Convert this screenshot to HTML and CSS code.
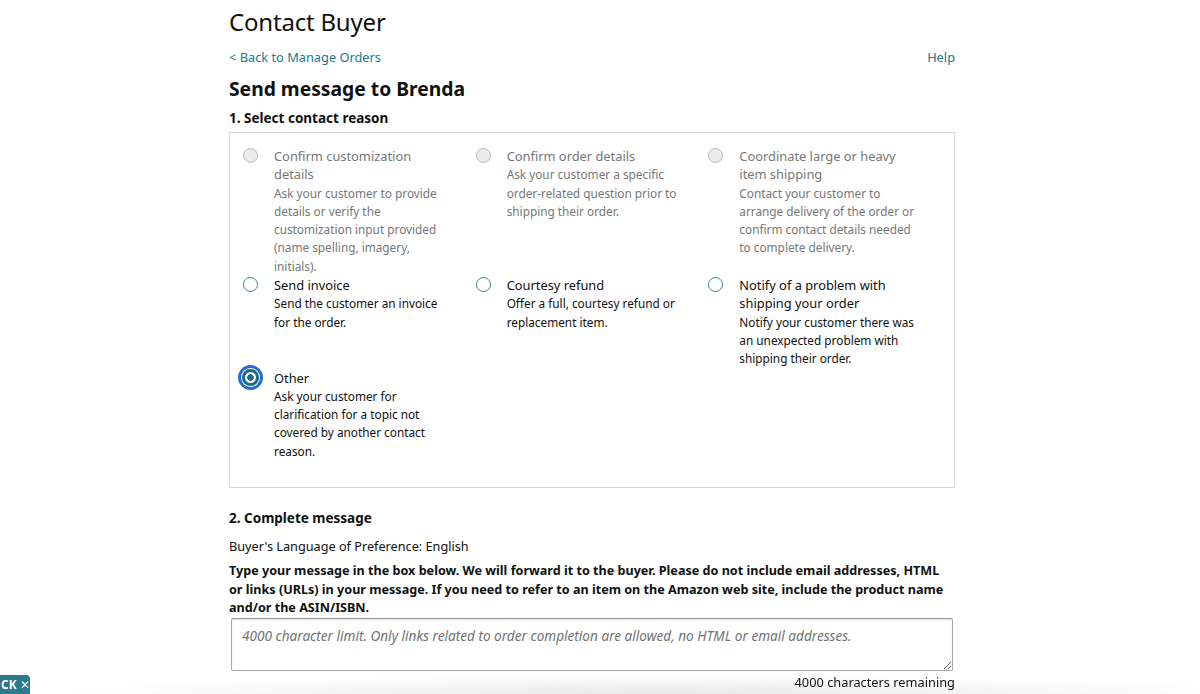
FILE: index.html
```html
<!DOCTYPE html>
<html lang="en">
<head>
<meta charset="utf-8">
<title>Contact Buyer</title>
<link rel="stylesheet" href="styles.css">
</head>
<body>
<div class="page">
  <h1 class="title">Contact Buyer</h1>
  <div class="nav-row">
    <a class="link" href="#">&lt; Back to Manage Orders</a>
    <a class="link" href="#">Help</a>
  </div>
  <h2 class="heading">Send message to Brenda</h2>
  <h3 class="section">1. Select contact reason</h3>
  <div class="reasons">
    <div class="option disabled">
      <span class="radio"></span>
      <div class="label">
        <div class="opt-title">Confirm customization details</div>
        <div class="opt-desc">Ask your customer to provide details or verify the customization input provided (name spelling, imagery, initials).</div>
      </div>
    </div>
    <div class="option disabled">
      <span class="radio"></span>
      <div class="label">
        <div class="opt-title">Confirm order details</div>
        <div class="opt-desc">Ask your customer a specific order-related question prior to shipping their order.</div>
      </div>
    </div>
    <div class="option disabled">
      <span class="radio"></span>
      <div class="label">
        <div class="opt-title">Coordinate large or heavy item shipping</div>
        <div class="opt-desc">Contact your customer to arrange delivery of the order or confirm contact details needed to complete delivery.</div>
      </div>
    </div>
    <div class="option">
      <span class="radio"></span>
      <div class="label">
        <div class="opt-title">Send invoice</div>
        <div class="opt-desc">Send the customer an invoice for the order.</div>
      </div>
    </div>
    <div class="option">
      <span class="radio"></span>
      <div class="label">
        <div class="opt-title">Courtesy refund</div>
        <div class="opt-desc">Offer a full, courtesy refund or replacement item.</div>
      </div>
    </div>
    <div class="option">
      <span class="radio"></span>
      <div class="label">
        <div class="opt-title">Notify of a problem with shipping your order</div>
        <div class="opt-desc">Notify your customer there was an unexpected problem with shipping their order.</div>
      </div>
    </div>
    <div class="option selected">
      <span class="radio"></span>
      <div class="label">
        <div class="opt-title">Other</div>
        <div class="opt-desc">Ask your customer for clarification for a topic not covered by another contact reason.</div>
      </div>
    </div>
  </div>
  <h3 class="section section-2">2. Complete message</h3>
  <p class="lang">Buyer's Language of Preference: English</p>
  <p class="instructions">Type your message in the box below. We will forward it to the buyer. Please do not include email addresses, HTML or links (URLs) in your message. If you need to refer to an item on the Amazon web site, include the product name and/or the ASIN/ISBN.</p>
  <textarea class="message" placeholder="4000 character limit. Only links related to order completion are allowed, no HTML or email addresses."></textarea>
  <div class="remaining">4000 characters remaining</div>
</div>
<div class="footer-shadow"></div>
<div class="feedback">CK <span class="x">✕</span></div>
</body>
</html>
```

FILE: styles.css
```css
* { box-sizing: border-box; }
html, body { margin: 0; padding: 0; background: #fff; }
body {
  font-family: "Noto Sans", "Open Sans", Arial, sans-serif;
  color: #0f1111;
  overflow: hidden;
}
.page {
  width: 726px;
  margin-left: 229px;
  padding-top: 6px;
}
.title {
  margin: 0;
  font-size: 24px;
  font-weight: 400;
  letter-spacing: -0.2px;
  line-height: 32px;
}
.nav-row {
  margin-top: 9px;
  display: flex;
  justify-content: space-between;
  font-size: 12.8px;
  line-height: 20px;
}
.link { color: #1a7a89; text-decoration: none; }
.heading {
  margin: 8px 0 0;
  font-size: 19.3px;
  font-weight: 700;
  line-height: 28px;
}
.section {
  margin: 5px 0 0;
  font-size: 13.5px;
  font-weight: 700;
  line-height: 20px;
}
.reasons {
  margin-top: 4px;
  border: 1px solid #d5d9d9;
  padding: 14px 13px 27px 13px;
  display: grid;
  grid-template-columns: repeat(3, 1fr);
  row-gap: 1px;
}
.option {
  display: flex;
  align-items: flex-start;
}
.radio {
  flex: none;
  width: 15px;
  height: 15px;
  margin-top: 1px;
  margin-right: 16px;
  border-radius: 50%;
  border: 1.5px solid #3b8696;
  background: #fff;
}
.disabled .radio {
  border: 1px solid #b9bcbc;
  background: #ebebeb;
}
.selected .radio {
  width: 17px;
  height: 17px;
  margin-top: 0;
  margin-left: -1px;
  margin-right: 15px;
  border: 3px solid #1a6d80;
  background: radial-gradient(circle, #1a6d80 0 3px, #fff 3.5px);
  box-shadow: 0 0 0 1px #fff, 0 0 0 4px #2a6cd1;
}
.label { width: 180px; }
.opt-title {
  font-size: 12.85px;
  line-height: 18.3px;
}
.opt-desc {
  font-size: 11.8px;
  line-height: 18.3px;
}
.disabled .label { color: #747878; }
.section-2 { margin-top: 20px; }
.lang {
  margin: 8px 0 0;
  font-size: 12.7px;
  line-height: 20px;
}
.instructions {
  margin: 6px 0 0;
  font-size: 12.6px;
  font-weight: 700;
  line-height: 18.5px;
}
.message {
  display: block;
  margin: 0 0 0 2px;
  width: 722px;
  height: 53px;
  border: 1px solid #a6a6a6;
  border-top-color: #949494;
  border-radius: 2px;
  box-shadow: inset 0 1px 2px rgba(15,17,17,0.12);
  padding: 7px 10px;
  font-family: inherit;
  font-size: 13.6px;
  line-height: 20px;
  resize: vertical;
}
.message::placeholder { color: #6f7373; font-style: italic; opacity: 1; }
.remaining {
  margin-top: 1px;
  text-align: right;
  font-size: 12.8px;
  line-height: 20px;
  position: relative;
  z-index: 2;
}
.footer-shadow {
  position: fixed;
  left: 0;
  right: 0;
  bottom: 0;
  height: 18px;
  background: radial-gradient(ellipse 50% 100% at 55% 100%, rgba(0,0,0,0.09), rgba(0,0,0,0) 100%);
  z-index: 1;
  pointer-events: none;
}
.feedback {
  position: fixed;
  left: 0;
  bottom: 0;
  height: 19px;
  width: 30px;
  padding: 0 0 0 1px;
  background: #2c7a8c;
  color: #fff;
  font-size: 12px;
  font-weight: 700;
  line-height: 20px;
  border-top-right-radius: 4px;
  z-index: 3;
  white-space: nowrap;
  overflow: hidden;
}
.feedback .x { font-weight: 400; }
```
